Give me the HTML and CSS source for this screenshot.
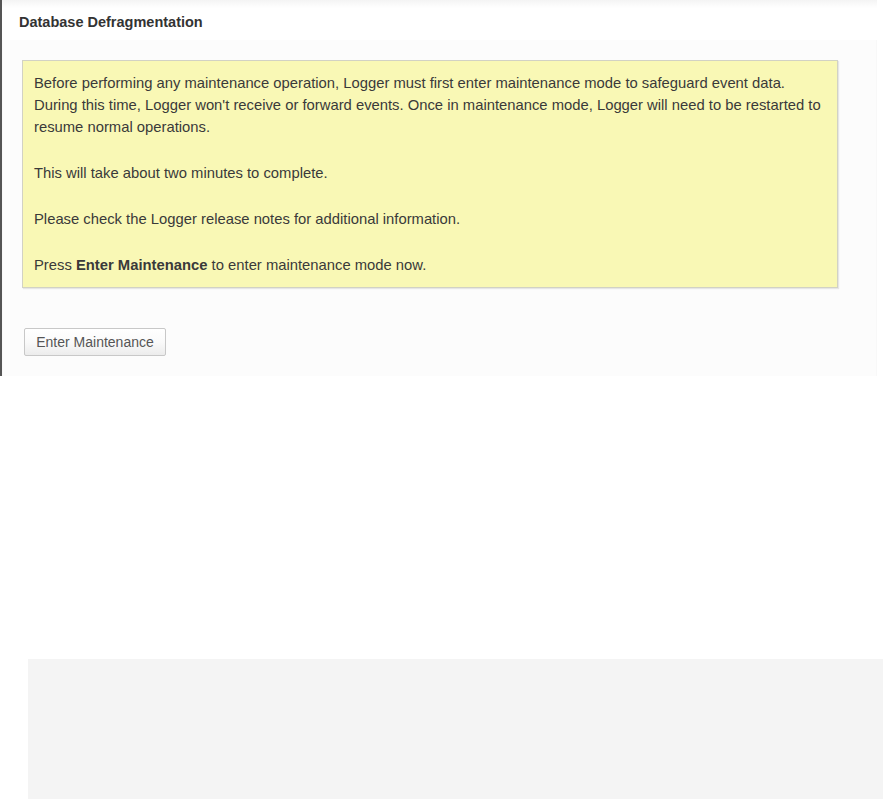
FILE: index.html
```html
<!DOCTYPE html>
<html lang="en">
  <head>
    <meta charset="UTF-8" />
    <title>Database Defragmentation</title>
    <link rel="stylesheet" href="styles.css">
  </head>
  <body>
    <div class="panel">
      <div class="panel-header">
        <h2>Database Defragmentation</h2>
      </div>
      <div class="panel-body">
        <div class="notice">
          <p>
            Before performing any maintenance operation, Logger must first enter maintenance mode to safeguard event data.<br>
            During this time, Logger won't receive or forward events. Once in maintenance mode, Logger will need to be restarted to<br>
            resume normal operations.
          </p>
          <p>This will take about two minutes to complete.</p>
          <p>Please check the Logger release notes for additional information.</p>
          <p>Press <b>Enter Maintenance</b> to enter maintenance mode now.</p>
        </div>
        <button class="btn">Enter Maintenance</button>
      </div>
    </div>

    <div class="footer-box"></div>
  </body>
</html>
```

FILE: styles.css
```css
body {
  margin: 0;
  background-color: #fff;
  font-family: 'Liberation Sans', Arial, sans-serif;
  color: #333;
}

.panel {
  width: 877px;
  height: 376px;
  border-left: 2px solid #555;
  background-color: #fcfcfc;
  box-shadow: inset 0 2px 2px -1px #aaa;
  box-sizing: border-box;
}

.panel-header {
  height: 40px;
  padding-left: 17px;
  background: linear-gradient(#f4f4f4, #fff 8px);
}

.panel-header h2 {
  margin: 0;
  font-size: 14.5px;
  line-height: 45px;
  color: #333;
}

.panel-body {
  padding: 20px 0 0 20px;
}

.notice {
  width: 816px;
  box-sizing: border-box;
  padding: 11px;
  background-color: #f9f8b5;
  border: 1px solid #d2d2c4;
  box-shadow: 1px 1px 1px #e6e6e6;
  font-size: 14.8px;
  line-height: 22px;
  color: #3a3a3a;
  white-space: nowrap;
}

.notice p {
  margin: 0 0 24px;
}

.notice p:last-child {
  margin-bottom: 0;
}

.btn {
  margin: 40px 0 0 2px;
  height: 28px;
  width: 142px;
  padding: 0;
  border: 1px solid #c8c8c8;
  border-radius: 2px;
  background: linear-gradient(#ffffff, #fafafa 50%, #ececec);
  font-family: 'Liberation Sans', Arial, sans-serif;
  font-size: 14px;
  color: #555;
}

.footer-box {
  margin: 283px 0 0 28px;
  height: 140px;
  background-color: #f4f4f4;
}
```
